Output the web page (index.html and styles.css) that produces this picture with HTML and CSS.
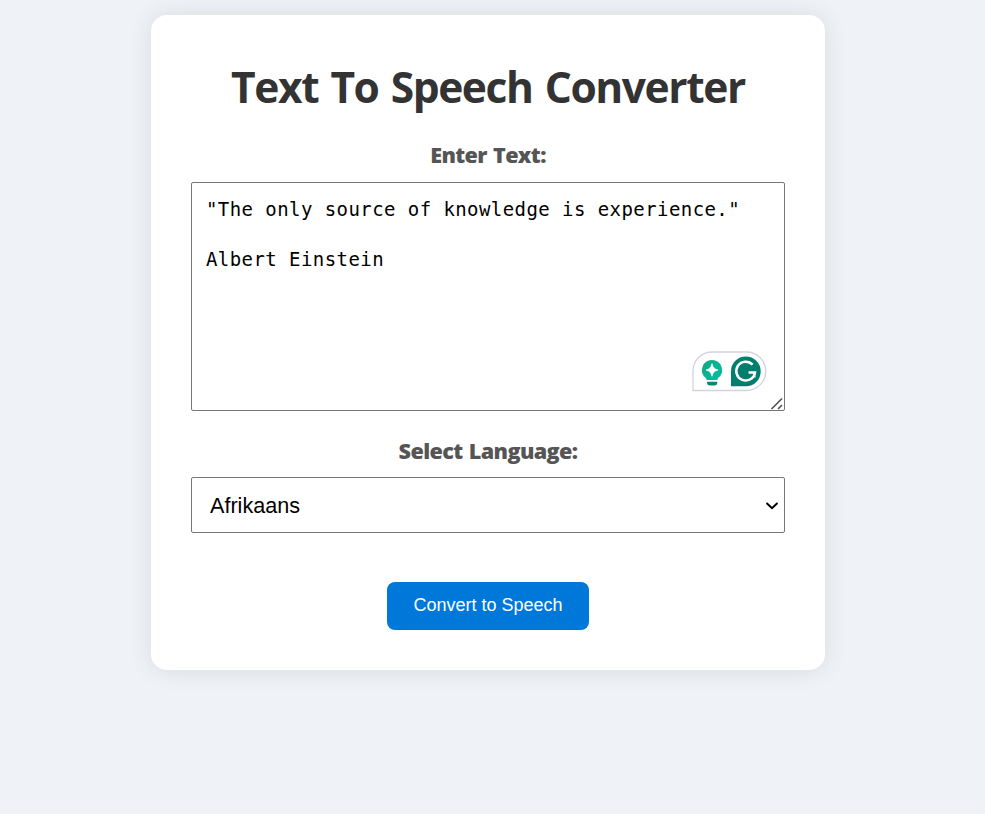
FILE: index.html
```html
<!DOCTYPE html>
<html lang="en">
<head>
<meta charset="utf-8">
<title>Text To Speech Converter</title>
<link rel="stylesheet" href="styles.css">
</head>
<body>
<main class="card">
  <h1 class="title">Text To Speech Converter</h1>
  <label class="label" for="text">Enter Text:</label>
  <div class="field">
    <textarea class="text" id="text" spellcheck="false">"The only source of knowledge is experience."

Albert Einstein</textarea>
    <div class="assistant">
      <svg width="76" height="42" viewBox="0 0 76 42">
        <path d="M2 39.500V20A19 19 0 0 1 21 1H55.500A19.200 19.200 0 0 1 55.500 39.500Z" fill="#fff" stroke="#d2d3e0" stroke-width="1.300"/>
        <defs><linearGradient id="bulb" x1="0" y1="0" x2="1" y2="1"><stop offset="0" stop-color="#11a683"/><stop offset="1" stop-color="#00bfa5"/></linearGradient></defs>
        <path d="M21 9a10 10 0 0 1 6.300 17.800L26.200 29.100H15.800L14.700 26.800A10 10 0 0 1 21 9Z" fill="url(#bulb)"/>
        <path d="M21 12.700Q22 18 27 19Q22 20 21 25.300Q20 20 15 19Q20 18 21 12.700Z" fill="#fff" stroke="#fff" stroke-width=".7"/>
        <path d="M16 30.700H26.300V32Q26 34.500 23.500 34.500H18.800Q16.300 34.500 16 32Z" fill="#028a74"/>
        <path d="M54.800 5.500A14.800 14.800 0 1 1 54.800 35.300H40V20.300A14.800 14.800 0 0 1 54.800 5.500Z" fill="#027e6f"/>
        <path d="M61.600 13.700A9.400 9.400 0 1 0 64 21.500H57.500M60.500 21.500H63.300V26.500" fill="none" stroke="#fff" stroke-width="2.500"/>
      </svg>
    </div>
    <svg class="grip" width="14" height="14" viewBox="0 0 14 14"><path d="M1.500 12L12 1.500M8 12L12 8" fill="none" stroke="#555" stroke-width="1.700"/></svg>
  </div>
  <label class="label" for="language">Select Language:</label>
  <div class="picker">
    <select class="language" id="language"><option>Afrikaans</option></select>
    <svg class="chevron" width="14" height="10" viewBox="0 0 14 10"><path d="M1.500 2L7 7.200L12.500 2" fill="none" stroke="#000" stroke-width="2"/></svg>
  </div>
  <button class="convert" type="button">Convert to Speech</button>
</main>
</body>
</html>
```
FILE: styles.css
```css
* { box-sizing: border-box; }
body {
  margin: 0;
  padding: 15px 9px 0 0;
  height: 814px;
  overflow: hidden;
  background: #eff3f8;
  font-family: "Segoe UI", "Open Sans", "Noto Sans", sans-serif;
}
.card {
  width: 674px;
  height: 655px;
  margin: 0 auto;
  padding: 40px;
  display: flex;
  flex-direction: column;
  align-items: center;
  background: #fff;
  border-radius: 16px;
  box-shadow: 0 0 25px rgba(0, 0, 0, .1);
}
.title {
  margin: 0;
  height: 85px;
  line-height: 64px;
  font-size: 42.5px;
  font-weight: 700;
  letter-spacing: -1.400px;
  word-spacing: 2.500px;
  color: #333;
  white-space: nowrap;
}
.label {
  height: 41px;
  line-height: 30px;
  font-size: 21.600px;
  font-weight: 800;
  letter-spacing: -.62px;
  word-spacing: 1.200px;
  color: #555;
  white-space: nowrap;
}
.field {
  position: relative;
  width: 594px;
  height: 229px;
  margin-top: 1px;
  margin-bottom: 25px;
}
.text {
  display: block;
  width: 100%;
  height: 100%;
  margin: 0;
  padding: 14px 13px 13px 14px;
  border: 1px solid #767676;
  border-radius: 2px;
  outline: 0;
  resize: none;
  overflow: hidden;
  font-family: Consolas, "DejaVu Sans Mono", monospace;
  font-size: 19px;
  letter-spacing: .43px;
  line-height: 25px;
  color: #000;
}
.assistant {
  position: absolute;
  right: 18px;
  bottom: 18px;
  width: 76px;
  height: 42px;
}
.assistant svg { display: block; }
.grip {
  position: absolute;
  right: 1px;
  bottom: 0;
}
.picker { position: relative; }
.language {
  display: block;
  width: 594px;
  height: 56px;
  padding: 0 18px;
  border: 1px solid #767676;
  border-radius: 2px;
  appearance: none;
  background: #fff;
  color: #000;
  font: 21.600px "Liberation Sans", Arial, sans-serif;
}
.chevron {
  position: absolute;
  right: 6px;
  top: 24px;
  pointer-events: none;
}
.convert {
  width: 202px;
  height: 48px;
  margin-top: 49px;
  padding: 0 0 2px;
  flex: none;
  border: 0;
  border-radius: 8px;
  background: #0078d9;
  color: #fff;
  font: 18px "Liberation Sans", Arial, sans-serif;
}
```
